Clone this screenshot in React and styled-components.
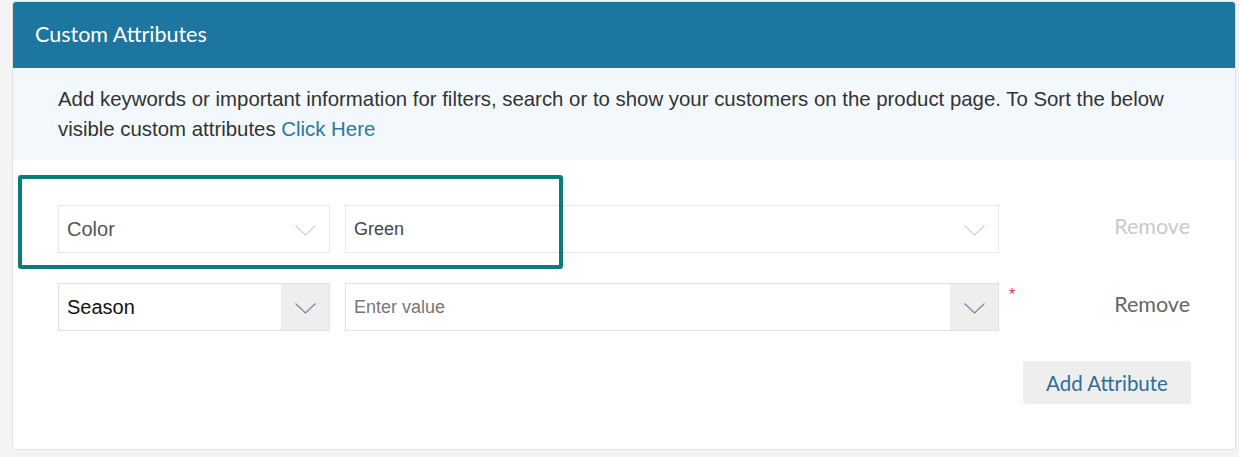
import React from 'react';
import styled, { createGlobalStyle } from 'styled-components';

const GlobalStyle = createGlobalStyle`
  body {
    margin: 0;
    background: #f4f4f4;
    font-family: "Liberation Sans", Arial, sans-serif;
  }
`;

const attributes = [
  { key: 'Color', value: 'Green', locked: true },
  { key: 'Season', value: '', locked: false, required: true },
];

const Chevron = ({ color }) => (
  <svg width="21" height="11" viewBox="0 0 21 11">
    <polyline points="0.5,0.5 10.5,10 20.5,0.5" fill="none" stroke={color} strokeWidth="1.1" />
  </svg>
);

const App = () => (
  <>
    <GlobalStyle />
    <Card>
      <Header>Custom Attributes</Header>
      <Description>
        Add keywords or important information for filters, search or to show your customers on the product page. To Sort the below
        visible custom attributes <Link>Click Here</Link>
      </Description>

      <Body>
        <Highlight />
        {attributes.map(attr => (
          <Row key={attr.key}>
            <Select width={272} locked={attr.locked}>
              <SelectText dark={!attr.locked}>{attr.key}</SelectText>
              <Arrow boxed={!attr.locked}>
                <Chevron color={attr.locked ? '#d0d0d0' : '#6f8296'} />
              </Arrow>
            </Select>
            <Select width={654} locked={attr.locked}>
              <ValueText placeholder={!attr.value}>{attr.value || 'Enter value'}</ValueText>
              <Arrow boxed={!attr.locked}>
                <Chevron color={attr.locked ? '#d0d0d0' : '#6f8296'} />
              </Arrow>
            </Select>
            <Required>{attr.required ? '*' : ''}</Required>
            <Remove disabled={attr.locked}>Remove</Remove>
          </Row>
        ))}
        <Actions>
          <AddButton>Add Attribute</AddButton>
        </Actions>
      </Body>
    </Card>
  </>
);

const Card = styled.div`
  box-sizing: border-box;
  margin: 1px 0 0 12px;
  width: 1224px;
  height: 449px;
  background: #fff;
  border: 1px solid #e0e0e0;
  border-radius: 4px;
  overflow: hidden;
`;

const Header = styled.div`
  box-sizing: border-box;
  height: 66px;
  background: #1d76a0;
  color: #fff;
  font-family: Lato, "Open Sans", sans-serif;
  font-size: 21.5px;
  display: flex;
  align-items: center;
  padding-left: 22px;
  padding-bottom: 2px;
`;

const Description = styled.div`
  background: #f3f8fc;
  padding: 16px 45px;
  font-size: 20.4px;
  line-height: 30px;
  color: #333;
`;

const Link = styled.a`
  color: #2a77a6;
  cursor: pointer;
`;

const Body = styled.div`
  position: relative;
  padding: 45px 45px 0 45px;
  display: flex;
  flex-direction: column;
  gap: 30px;
`;

const Highlight = styled.div`
  position: absolute;
  left: 5px;
  top: 15px;
  width: 545px;
  height: 94px;
  box-sizing: border-box;
  border: 4px solid #0b7d78;
  border-radius: 3px;
  pointer-events: none;
`;

const Row = styled.div`
  display: flex;
  align-items: flex-start;
  gap: 15px;
`;

const Select = styled.div`
  box-sizing: border-box;
  width: ${p => p.width}px;
  height: 48px;
  border: 1px solid ${p => (p.locked ? '#e8e8e8' : '#e2e2e2')};
  background: #fff;
  display: flex;
  align-items: stretch;
`;

const SelectText = styled.div`
  flex: 1;
  display: flex;
  align-items: center;
  padding-left: 8px;
  font-size: 20px;
  color: ${p => (p.dark ? '#111' : '#555')};
`;

const ValueText = styled.div`
  flex: 1;
  display: flex;
  align-items: center;
  padding-left: 8px;
  font-size: 18px;
  color: ${p => (p.placeholder ? '#777' : '#444')};
`;

const Arrow = styled.div`
  width: 48px;
  display: flex;
  align-items: center;
  justify-content: center;
  background: ${p => (p.boxed ? '#eeeeee' : 'transparent')};
  padding-top: 2px;
`;

const Required = styled.div`
  width: 10px;
  margin-left: -5px;
  color: #e53935;
  font-size: 16px;
  line-height: 16px;
  padding-top: 4px;
`;

const Remove = styled.div`
  margin-left: auto;
  height: 48px;
  display: flex;
  align-items: center;
  font-family: Lato, "Open Sans", sans-serif;
  font-size: 21.5px;
  color: ${p => (p.disabled ? '#c9c9c9' : '#666')};
  padding-bottom: 6px;
  box-sizing: border-box;
`;

const Actions = styled.div`
  display: flex;
  justify-content: flex-end;
`;

const AddButton = styled.button`
  width: 168px;
  height: 43px;
  margin-right: -1px;
  border: none;
  border-radius: 3px;
  background: #eeeeee;
  color: #2e6f98;
  font-family: Lato, "Open Sans", sans-serif;
  font-size: 20.5px;
  padding-top: 2px;
  cursor: pointer;
`;

export default App;
